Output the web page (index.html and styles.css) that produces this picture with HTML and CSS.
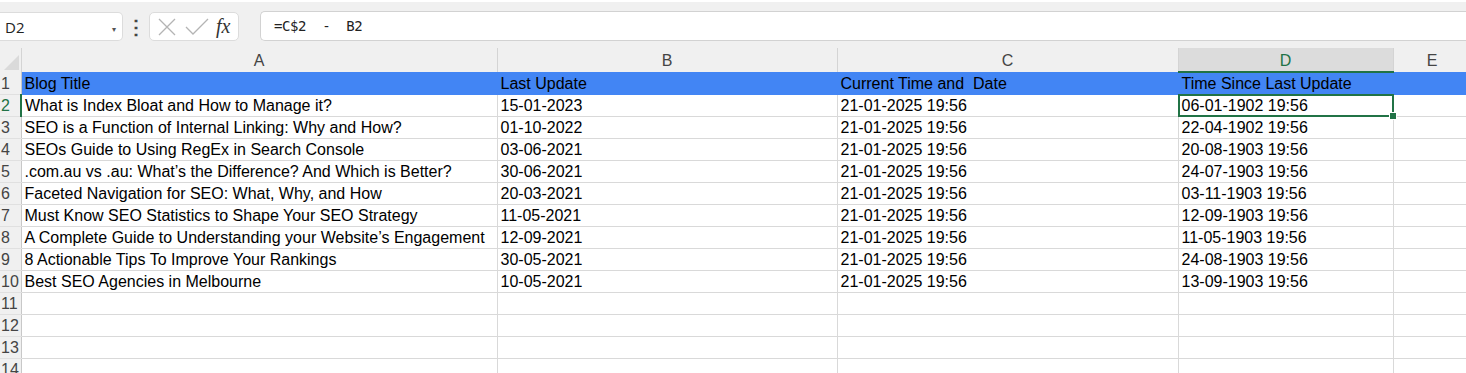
FILE: index.html
```html
<!DOCTYPE html>
<html>
<head>
    <meta charset="utf-8">
    <link rel="stylesheet" href="styles.css">
</head>
<body>
    <div class="toolbar">
        <div class="namebox">
            <span>D2</span>
            <span class="caret">▾</span>
        </div>
        <div class="dots">⋮</div>
        <div class="fxbox">
            <svg width="18" height="18" viewBox="0 0 18 18"><path d="M1 1 L17 17 M17 1 L1 17" stroke="#b4b4b4" stroke-width="1.3" fill="none"/></svg>
            <svg width="24" height="18" viewBox="0 0 24 18"><path d="M1 9 L8 16 L23 1" stroke="#b4b4b4" stroke-width="1.3" fill="none"/></svg>
            <span class="fx">fx</span>
        </div>
        <div class="formula">=C$2  -  B2</div>
    </div>

    <table class="sheet">
        <colgroup>
            <col class="c-row">
            <col class="c-a">
            <col class="c-b">
            <col class="c-c">
            <col class="c-d">
            <col class="c-e">
        </colgroup>
        <thead>
            <tr>
                <th class="corner"><div class="tri"></div></th>
                <th>A</th>
                <th>B</th>
                <th>C</th>
                <th class="sel-col">D</th>
                <th>E</th>
            </tr>
        </thead>
        <tbody>
            <tr class="head-row">
                <th>1</th>
                <td>Blog Title</td>
                <td>Last Update</td>
                <td>Current Time and&nbsp; Date</td>
                <td>Time Since Last Update</td>
                <td></td>
            </tr>
            <tr>
                <th class="sel-row">2</th>
                <td>What is Index Bloat and How to Manage it?</td>
                <td>15-01-2023</td>
                <td>21-01-2025 19:56</td>
                <td class="active">06-01-1902 19:56<div class="cursor"><div class="handle"></div></div></td>
                <td></td>
            </tr>
            <tr>
                <th>3</th>
                <td>SEO is a Function of Internal Linking: Why and How?</td>
                <td>01-10-2022</td>
                <td>21-01-2025 19:56</td>
                <td>22-04-1902 19:56</td>
                <td></td>
            </tr>
            <tr>
                <th>4</th>
                <td>SEOs Guide to Using RegEx in Search Console</td>
                <td>03-06-2021</td>
                <td>21-01-2025 19:56</td>
                <td>20-08-1903 19:56</td>
                <td></td>
            </tr>
            <tr>
                <th>5</th>
                <td>.com.au vs .au: What’s the Difference? And Which is Better?</td>
                <td>30-06-2021</td>
                <td>21-01-2025 19:56</td>
                <td>24-07-1903 19:56</td>
                <td></td>
            </tr>
            <tr>
                <th>6</th>
                <td>Faceted Navigation for SEO: What, Why, and How</td>
                <td>20-03-2021</td>
                <td>21-01-2025 19:56</td>
                <td>03-11-1903 19:56</td>
                <td></td>
            </tr>
            <tr>
                <th>7</th>
                <td>Must Know SEO Statistics to Shape Your SEO Strategy</td>
                <td>11-05-2021</td>
                <td>21-01-2025 19:56</td>
                <td>12-09-1903 19:56</td>
                <td></td>
            </tr>
            <tr>
                <th>8</th>
                <td>A Complete Guide to Understanding your Website’s Engagement</td>
                <td>12-09-2021</td>
                <td>21-01-2025 19:56</td>
                <td>11-05-1903 19:56</td>
                <td></td>
            </tr>
            <tr>
                <th>9</th>
                <td>8 Actionable Tips To Improve Your Rankings</td>
                <td>30-05-2021</td>
                <td>21-01-2025 19:56</td>
                <td>24-08-1903 19:56</td>
                <td></td>
            </tr>
            <tr>
                <th>10</th>
                <td>Best SEO Agencies in Melbourne</td>
                <td>10-05-2021</td>
                <td>21-01-2025 19:56</td>
                <td>13-09-1903 19:56</td>
                <td></td>
            </tr>
            <tr><th>11</th><td></td><td></td><td></td><td></td><td></td></tr>
            <tr><th>12</th><td></td><td></td><td></td><td></td><td></td></tr>
            <tr><th>13</th><td></td><td></td><td></td><td></td><td></td></tr>
            <tr><th>14</th><td></td><td></td><td></td><td></td><td></td></tr>
        </tbody>
    </table>
</body>
</html>
```

FILE: styles.css
```css
body {
    margin: 0;
    width: 1466px;
    height: 373px;
    overflow: hidden;
    background: #fff;
    font-family: 'Liberation Sans', Arial, sans-serif;
}

/* formula bar */

.toolbar {
    display: flex;
    align-items: center;
    height: 46px;
    border-top: 2px solid #fff;
    background: #f0f0f0;
}

.namebox {
    display: flex;
    align-items: center;
    justify-content: space-between;
    width: 117px;
    height: 27px;
    padding-left: 5px;
    background: #fff;
    border: 1px solid #dcdcdc;
    border-left: none;
    border-radius: 0 5px 5px 0;
    font-family: 'Open Sans', sans-serif;
    font-size: 15px;
    color: #222;
    margin-top: 3px;
}

.caret {
    font-size: 8px;
    color: #555;
    margin-right: 6px;
    margin-top: 3px;
}

.dots {
    width: 26px;
    text-align: center;
    font-size: 20px;
    font-weight: bold;
    color: #444;
    margin-top: 3px;
}

.fxbox {
    display: flex;
    align-items: center;
    gap: 9px;
    width: 80px;
    height: 27px;
    padding-left: 8px;
    background: #fff;
    border: 1px solid #dcdcdc;
    border-radius: 5px;
    margin-top: 3px;
}

.fx {
    font-family: 'Liberation Serif', serif;
    font-style: italic;
    font-size: 20px;
    color: #333;
    margin-left: -2px;
}

.formula {
    flex: 1;
    height: 28px;
    margin-left: 21px;
    padding-left: 13px;
    background: #fff;
    border: 1px solid #d2d2d2;
    border-right: none;
    border-radius: 5px 0 0 5px;
    font-family: 'DejaVu Sans Mono', monospace;
    font-size: 14px;
    letter-spacing: -0.4px;
    line-height: 28px;
    white-space: pre;
    color: #222;
    margin-top: 2px;
}

/* grid */

.sheet {
    border-collapse: collapse;
    table-layout: fixed;
    width: 1471px;
    font-size: 16px;
    color: #000;
}

.c-row { width: 21px; }
.c-a { width: 476px; }
.c-b { width: 340px; }
.c-c { width: 341px; }
.c-d { width: 215px; }
.c-e { width: 78px; }

.sheet thead th {
    height: 23px;
    padding: 0;
    background: #f0f0f0;
    border-right: 1px solid #d4d4d4;
    font-weight: normal;
    font-size: 16px;
    color: #444;
    text-align: center;
    vertical-align: bottom;
    line-height: 22px;
}

.sheet thead th.sel-col {
    background: #dcdcdc;
    color: #217346;
    border-bottom: 2px solid #217346;
    line-height: 20px;
}

.corner {
    position: relative;
}

.tri {
    position: absolute;
    right: 2px;
    bottom: 2px;
    width: 0;
    height: 0;
    border-left: 15px solid transparent;
    border-bottom: 15px solid #dadada;
}

.sheet tbody th {
    height: 21px;
    padding: 0 0 0 1px;
    background: #f0f0f0;
    border-right: 1px solid #c8c8c8;
    border-bottom: 1px solid #e0e0e0;
    font-weight: normal;
    font-size: 16px;
    color: #444;
    text-align: left;
    white-space: nowrap;
    overflow: hidden;
    line-height: 21px;
}

.sheet tbody th.sel-row {
    color: #217346;
    border-right: 2px solid #217346;
}

.sheet td {
    height: 21px;
    padding: 0 0 0 3px;
    border-right: 1px solid #d9d9d9;
    border-bottom: 1px solid #d9d9d9;
    white-space: nowrap;
    overflow: visible;
    line-height: 21px;
}

.head-row td {
    background: #4285f4;
    border-color: #4285f4;
}

.head-row th {
    border-bottom-color: #d0d0d0;
}

.active {
    position: relative;
}

.cursor {
    position: absolute;
    left: -1px;
    top: -1px;
    right: -1px;
    bottom: -1px;
    border: 2px solid #217346;
}

.handle {
    position: absolute;
    right: -5px;
    bottom: -5px;
    width: 6px;
    height: 6px;
    background: #217346;
    border: 1px solid #fff;
}
```
